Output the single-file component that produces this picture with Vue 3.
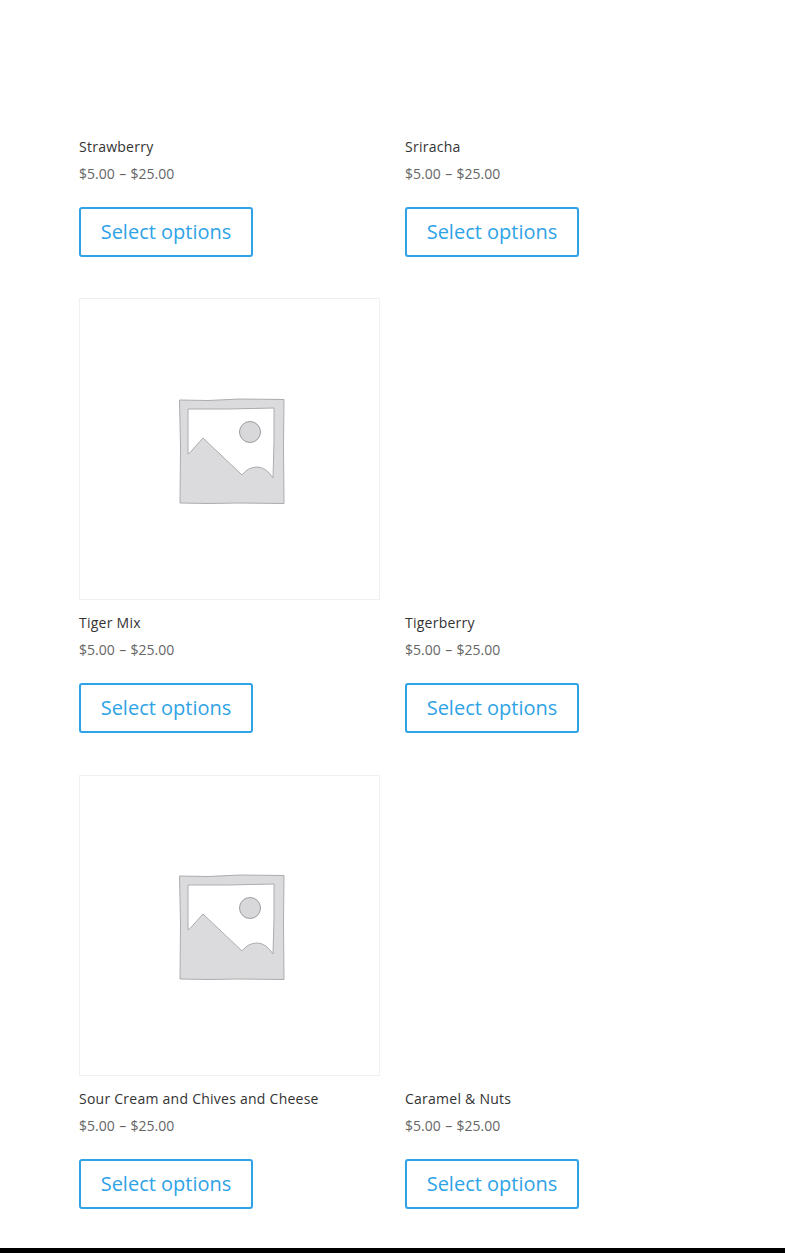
<template>
	<div class="page">
		<div class="products">
			<div v-for="p in products" :key="p.name" class="product" :class="{ 'first-row': p.row === 1 }">
				<div v-if="p.thumb" class="thumb">
					<svg class="placeholder" width="108" height="108" viewBox="0 0 108 108">
						<path class="frame" fill-rule="evenodd" d="M1.500 3 L30 3.500 L62 2 L106 2.500 L105.500 50 L106 106.500 L60 106 L30 106.500 L2 106 L2.500 50 Z M10 12 L10 57 L12 55.500 L25 41 L64 78 Q70 70 79 70 Q88 70 95 81 L96 45 L96 11 L50 12 Z" />
						<circle class="sun" cx="72" cy="35" r="10.500" />
					</svg>
				</div>
				<div v-else class="thumb-empty"></div>
				<div class="title">{{ p.name }}</div>
				<div class="price">$5.00 – $25.00</div>
				<a class="button">Select options</a>
			</div>
		</div>
		<div class="footer"></div>
	</div>
</template>

<script setup>
const products = [
	{ name: "Strawberry", row: 1, thumb: false },
	{ name: "Sriracha", row: 1, thumb: false },
	{ name: "Tiger Mix", row: 2, thumb: true },
	{ name: "Tigerberry", row: 2, thumb: false },
	{ name: "Sour Cream and Chives and Cheese", row: 3, thumb: true },
	{ name: "Caramel & Nuts", row: 3, thumb: false },
];
</script>

<style scoped>
.page {
	height: 1253px;
	overflow: hidden;
	display: flex;
	flex-direction: column;
	background: #fff;
	font-family: "Open Sans", sans-serif;
}

.products {
	flex: 1;
	padding: 0 0 0 79px;
	display: grid;
	grid-template-columns: 301px 301px;
	column-gap: 25px;
	row-gap: 41.5px;
	align-content: start;
}

.thumb,
.thumb-empty {
	height: 301.7px;
	box-sizing: border-box;
}
.first-row .thumb-empty { height: 123.9px; }

.thumb {
	border: 1px solid #f0f0f0;
	display: flex;
	align-items: center;
	justify-content: center;
}

.placeholder {
	display: block;
	margin: 4px 0 0 5px;
	filter: blur(0.4px);
}
.frame {
	fill: #dbdbde;
	stroke: #acacaf;
	stroke-width: 1;
	stroke-linejoin: round;
}
.sun {
	fill: #d8d8db;
	stroke: #9c9ca0;
	stroke-width: 1;
}

.title {
	margin-top: 13px;
	font-size: 14px;
	line-height: 20px;
	letter-spacing: 0.25px;
	color: #333;
}

.price {
	margin-top: 7px;
	font-size: 14px;
	line-height: 20px;
	word-spacing: 0.8px;
	color: #666;
}

.button {
	display: block;
	box-sizing: border-box;
	width: 174px;
	height: 50px;
	margin-top: 23px;
	border: 2px solid #2ea3e6;
	border-radius: 3px;
	font-size: 20px;
	line-height: 46px;
	text-align: center;
	color: #2ea3e6;
}

.footer {
	height: 5px;
	background: #000;
}
</style>
